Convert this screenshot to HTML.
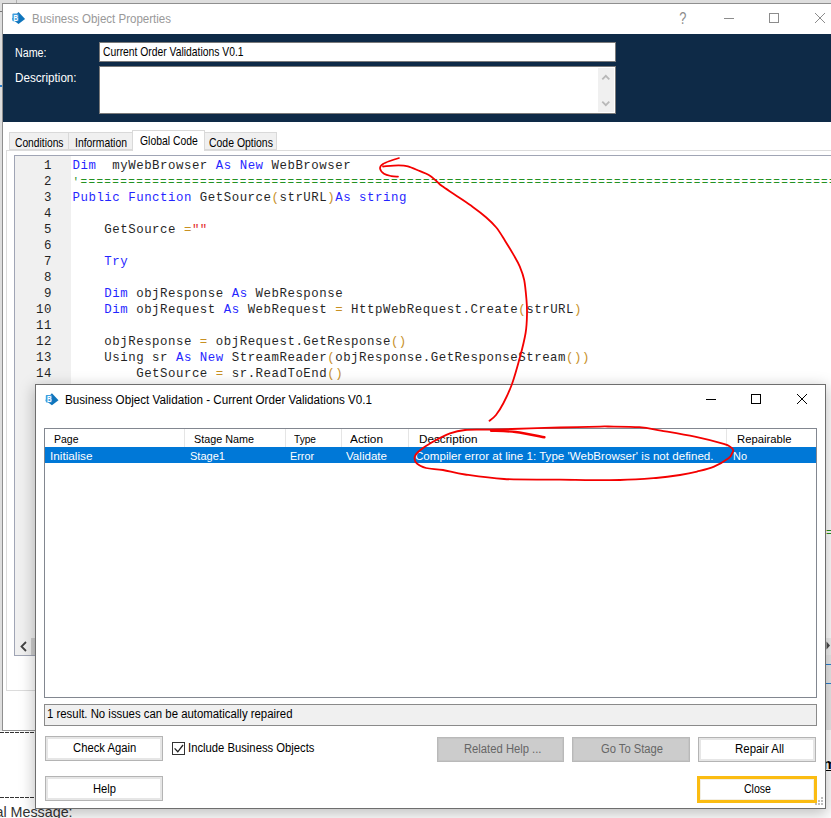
<!DOCTYPE html>
<html><head><meta charset="utf-8"><title>Business Object Properties</title>
<style>
html,body{margin:0;padding:0;}
body{width:831px;height:818px;overflow:hidden;position:relative;background:#fff;font-family:"Liberation Sans",sans-serif;font-size:12px;color:#000;}
.a{position:absolute;white-space:pre;box-sizing:border-box;}
.t{line-height:16px;height:16px;}
.code{font-family:"Liberation Mono",monospace;font-size:12.4px;letter-spacing:0.524px;line-height:16px;opacity:.86}
.k{color:#0000ff}.g{color:#008000}.gs{font-size:11px;letter-spacing:1.363px}.r{color:#e00000}.o{color:#c08000}
.btn{background:#fff;border:1px solid #b4b4b4;box-shadow:inset 0 0 0 2px #e6e6e6}
.btnd{background:#cccccc;border:1px solid #b9b9b9;box-shadow:inset 0 0 0 1px #c4c4c4}
svg{position:absolute;left:0;top:0;overflow:visible}
</style></head><body>
<!-- background app -->
<div class="a" style="left:0;top:0;width:831px;height:4px;background:#dedede"></div>
<div class="a" style="left:16px;top:0;width:1px;height:3px;background:#b0b0b0"></div>
<div class="a" style="left:0;top:0;width:3px;height:731px;background:#dedede"></div>
<div class="a" style="left:0;top:11px;width:3px;height:1px;background:#777"></div>
<div class="a" style="left:0;top:85px;width:3px;height:2px;background:#2a7fd0"></div>
<!-- below window 1 -->
<div class="a" style="left:0;top:732px;width:40px;height:1px;background:repeating-linear-gradient(90deg,#333 0 4px,#fff 4px 5px)"></div>
<div class="a" style="left:0;top:797px;width:40px;height:1px;background:repeating-linear-gradient(90deg,#333 0 4px,#fff 4px 5px)"></div>
<div class="a" id="msg" style="left:-4.5px;top:804px;font-size:14.3px;line-height:16px;color:#333">al Message:</div>

<!-- window 1 -->
<div class="a" id="w1" style="left:2px;top:3px;width:840px;height:728px;background:#fff;border:1px solid #8f8f8f"></div>
<div class="a" id="navy" style="left:3px;top:34px;width:828px;height:88px;background:#0e2a47"></div>
<div class="a" id="tbname" style="left:99px;top:42px;width:517px;height:20px;background:#fff;border:1px solid #7a7a7a"></div>
<div class="a" id="tbdesc" style="left:99px;top:66px;width:517px;height:48px;background:#fff;border:1px solid #7a7a7a"></div>
<div class="a" id="sbdesc" style="left:598px;top:68px;width:16px;height:44px;background:#f0f0f0"></div>

<!-- tabs -->
<div class="a" id="tabpanel" style="left:6px;top:150px;width:830px;height:541px;border:1px solid #dcdcdc;background:#fff"></div>
<div class="a" id="tab1" style="left:9px;top:132px;width:60px;height:18px;background:#f0f0f0;border:1px solid #d9d9d9"></div>
<div class="a" id="tab2" style="left:68px;top:132px;width:65px;height:18px;background:#f0f0f0;border:1px solid #d9d9d9"></div>
<div class="a" id="tab4" style="left:204px;top:132px;width:73px;height:18px;background:#f0f0f0;border:1px solid #d9d9d9"></div>
<div class="a" id="tab3" style="left:132px;top:130px;width:73px;height:21px;background:#fff;border:1px solid #d9d9d9;border-bottom:none"></div>

<!-- code box -->
<div class="a" id="codebox" style="left:14px;top:155px;width:830px;height:501px;border:1px solid #a0a5b5;background:#fff"></div>
<div class="a" id="gutter" style="left:15px;top:156px;width:56px;height:482px;background:#f0f0f0"></div>
<div class="a" id="hscroll" style="left:15px;top:638px;width:820px;height:17px;background:#f0f0f0"></div>
<div class="a" style="left:31px;top:638px;width:4px;height:17px;background:#cdcdcd"></div>
<div class="a code" id="lnums" style="left:15px;top:158px;width:37px;text-align:right">1
2
3
4
5
6
7
8
9
10
11
12
13
14</div>
<div class="a code" id="codetxt" style="left:72.5px;top:158px"><span class="k">Dim</span>  myWebBrowser <span class="k">As New</span> WebBrowser
<span class="g gs">'===============================================================================================</span>
<span class="k">Public Function</span> GetSource<span class="o">(</span>strURL<span class="o">)</span><span class="k">As string</span>

    GetSource <span class="o">=</span><span class="r">""</span>

    <span class="k">Try</span>

    <span class="k">Dim</span> objResponse <span class="k">As</span> WebResponse
    <span class="k">Dim</span> objRequest <span class="k">As</span> WebRequest <span class="o">=</span> HttpWebRequest.Create<span class="o">(</span>strURL<span class="o">)</span>

    objResponse <span class="o">=</span> objRequest.GetResponse<span class="o">()</span>
    Using sr <span class="k">As New</span> StreamReader<span class="o">(</span>objResponse.GetResponseStream<span class="o">())</span>
        GetSource <span class="o">=</span> sr.ReadToEnd<span class="o">()</span></div>
<div class="a code g gs" style="left:826px;top:525px">==</div>

<div class="a" style="left:826px;top:655px;width:5px;height:75px;background:#e9e9e9"></div>
<div class="a" style="left:826px;top:664px;width:5px;height:1px;background:#2a7fd0"></div>
<div class="a" style="left:826px;top:683px;width:5px;height:1px;background:#2a7fd0"></div>
<div class="a" style="left:826px;top:730px;width:5px;height:88px;background:#fff"></div>
<div class="a" style="left:823px;top:755px;font-size:15px;font-weight:bold;text-decoration:underline;line-height:18px">m</div>
<!-- window 2 -->
<div class="a" id="w2" style="left:35px;top:384px;width:791px;height:425px;background:#fff;border:1px solid #6e6e6e;box-shadow:0 4px 14px 1px rgba(0,0,0,.25)"></div>
<div class="a" id="list" style="left:44px;top:428px;width:773px;height:270px;border:1px solid #828790;background:#fff"></div>
<div class="a" style="left:184px;top:429px;width:1px;height:18px;background:#e5e5e5"></div>
<div class="a" style="left:285px;top:429px;width:1px;height:18px;background:#e5e5e5"></div>
<div class="a" style="left:341px;top:429px;width:1px;height:18px;background:#e5e5e5"></div>
<div class="a" style="left:408px;top:429px;width:1px;height:18px;background:#e5e5e5"></div>
<div class="a" style="left:726px;top:429px;width:1px;height:18px;background:#e5e5e5"></div>
<div class="a" id="selrow" style="left:45px;top:447px;width:771px;height:16px;background:#0078d7"></div>
<div class="a" id="status" style="left:44px;top:704px;width:773px;height:22px;border:1px solid #8a8a8a;background:#f0f0f0"></div>
<div class="a btn" style="left:45px;top:736px;width:118px;height:25px"></div>
<div class="a btn" style="left:45px;top:776px;width:118px;height:25px"></div>
<div class="a btnd" style="left:437px;top:737px;width:127px;height:25px"></div>
<div class="a btnd" style="left:572px;top:737px;width:118px;height:25px"></div>
<div class="a btn" style="left:698px;top:737px;width:118px;height:25px"></div>
<div class="a" style="left:697px;top:776px;width:120px;height:27px;background:#fff;border:3px solid #fbbc12;box-shadow:inset 0 0 0 1px #f3efe4"></div>
<div class="a" id="cb" style="left:172px;top:742px;width:13px;height:13px;background:#fff;border:1px solid #333"></div>

<div class="a t" id="t1" style="left:32px;top:10.899999999999999px;font-size:12px;color:#999;transform:scaleX(0.9604);transform-origin:0 50%;">Business Object Properties</div>
<div class="a t" id="lname" style="left:14.8px;top:44.5px;font-size:12px;color:#fff;transform:scaleX(0.8912);transform-origin:0 50%;">Name:</div>
<div class="a t" id="ldesc" style="left:14.7px;top:69.5px;font-size:12px;color:#fff;transform:scaleX(0.9722);transform-origin:0 50%;">Description:</div>
<div class="a t" id="tname" style="left:102.7px;top:44.0px;font-size:12.8px;color:#000;transform:scaleX(0.8073);transform-origin:0 50%;">Current Order Validations V0.1</div>
<div class="a t" id="tt1" style="left:14.5px;top:134.6px;font-size:13.2px;color:#000;transform:scaleX(0.7783);transform-origin:0 50%;">Conditions</div>
<div class="a t" id="tt2" style="left:75px;top:134.6px;font-size:13.2px;color:#000;transform:scaleX(0.7881);transform-origin:0 50%;">Information</div>
<div class="a t" id="tt3" style="left:139.7px;top:132.6px;font-size:13.2px;color:#000;transform:scaleX(0.7884);transform-origin:0 50%;">Global Code</div>
<div class="a t" id="tt4" style="left:209.4px;top:134.6px;font-size:13.2px;color:#000;transform:scaleX(0.7924);transform-origin:0 50%;">Code Options</div>
<div class="a t" id="t2" style="left:65px;top:391.5px;font-size:12px;color:#000;transform:scaleX(0.9724);transform-origin:0 50%;">Business Object Validation - Current Order Validations V0.1</div>
<div class="a t" id="h1" style="left:54px;top:430.5px;font-size:11.8px;color:#000;transform:scaleX(0.8889);transform-origin:0 50%;">Page</div>
<div class="a t" id="h2" style="left:194px;top:430.5px;font-size:11.8px;color:#000;transform:scaleX(0.9149);transform-origin:0 50%;">Stage Name</div>
<div class="a t" id="h3" style="left:294px;top:430.5px;font-size:11.8px;color:#000;transform:scaleX(0.8601);transform-origin:0 50%;">Type</div>
<div class="a t" id="h4" style="left:350px;top:430.5px;font-size:11.8px;color:#000;transform:scaleX(1.0062);transform-origin:0 50%;">Action</div>
<div class="a t" id="h5" style="left:418.5px;top:430.5px;font-size:11.8px;color:#000;transform:scaleX(0.9913);transform-origin:0 50%;">Description</div>
<div class="a t" id="h6" style="left:736.5px;top:430.5px;font-size:11.8px;color:#000;transform:scaleX(0.9551);transform-origin:0 50%;">Repairable</div>
<div class="a t" id="r1" style="left:50px;top:447.8px;font-size:11.8px;color:#fff;transform:scaleX(0.9971);transform-origin:0 50%;">Initialise</div>
<div class="a t" id="r2" style="left:190px;top:447.8px;font-size:11.8px;color:#fff;transform:scaleX(0.9361);transform-origin:0 50%;">Stage1</div>
<div class="a t" id="r3" style="left:290px;top:447.8px;font-size:11.8px;color:#fff;transform:scaleX(0.9154);transform-origin:0 50%;">Error</div>
<div class="a t" id="r4" style="left:346px;top:447.8px;font-size:11.8px;color:#fff;transform:scaleX(0.9817);transform-origin:0 50%;">Validate</div>
<div class="a t" id="r5" style="left:414.5px;top:447.8px;font-size:11.8px;color:#fff;transform:scaleX(0.9828);transform-origin:0 50%;">Compiler error at line 1: Type 'WebBrowser' is not defined.</div>
<div class="a t" id="r6" style="left:733px;top:447.8px;font-size:11.8px;color:#fff;transform:scaleX(0.9275);transform-origin:0 50%;">No</div>
<div class="a t" id="st" style="left:47.3px;top:705.9px;font-size:12px;color:#000;transform:scaleX(0.9486);transform-origin:0 50%;">1 result. No issues can be automatically repaired</div>
<div class="a t" id="b1" style="left:73.3px;top:739.9px;font-size:12px;color:#000;transform:scaleX(0.9378);transform-origin:0 50%;">Check Again</div>
<div class="a t" id="b2" style="left:188px;top:739.9px;font-size:12px;color:#000;transform:scaleX(0.9388);transform-origin:0 50%;">Include Business Objects</div>
<div class="a t" id="b3" style="left:463.5px;top:741.3px;font-size:12px;color:#666;transform:scaleX(0.9369);transform-origin:0 50%;">Related Help ...</div>
<div class="a t" id="b4" style="left:601px;top:741.3px;font-size:12px;color:#666;transform:scaleX(0.9323);transform-origin:0 50%;">Go To Stage</div>
<div class="a t" id="b5" style="left:734.5px;top:741.3px;font-size:12px;color:#000;transform:scaleX(0.9541);transform-origin:0 50%;">Repair All</div>
<div class="a t" id="b6" style="left:93px;top:780.5px;font-size:12px;color:#000;transform:scaleX(0.9316);transform-origin:0 50%;">Help</div>
<div class="a t" id="b7" style="left:744px;top:781.3px;font-size:12px;color:#000;transform:scaleX(0.8798);transform-origin:0 50%;">Close</div>

<svg width="831" height="818" viewBox="0 0 831 818">
 <!-- icons -->
 <g id="ic1" transform="translate(-33.4,-381.3)">
  <polygon points="51.9,393.2 58.5,400.3 51.9,405.2 45.3,400.3" fill="#0f75bc"/>
  <rect x="45.8" y="394.9" width="6.3" height="7.6" rx="0.8" fill="#409cdd"/>
  <text transform="translate(46.9,401.9) scale(.74,1)" font-family="Liberation Sans, sans-serif" font-weight="bold" font-size="8.6" fill="#fff">B</text>
 </g>
 <g id="ic2">
  <polygon points="51.9,393.2 58.5,400.3 51.9,405.2 45.3,400.3" fill="#0f75bc"/>
  <rect x="45.8" y="394.9" width="6.3" height="7.6" rx="0.8" fill="#409cdd"/>
  <text transform="translate(46.9,401.9) scale(.74,1)" font-family="Liberation Sans, sans-serif" font-weight="bold" font-size="8.6" fill="#fff">B</text>
 </g>
 <!-- window 1 controls -->
 <g stroke="#8c8c8c" stroke-width="1" fill="none">
  <path d="M724 18.5H734"/>
  <rect x="769.5" y="13.5" width="9" height="9"/>
  <path d="M815 13L825 23M825 13L815 23"/>
 </g>
 <text transform="translate(679.3,24) scale(.78,1)" font-family="Liberation Sans, sans-serif" font-size="16.5" fill="#8c8c8c">?</text>
 <!-- description scrollbar chevrons -->
 <g stroke="#b8b8b8" stroke-width="1.8" fill="none">
  <path d="M602.3 79.3L605.8 75.8L609.3 79.3"/>
  <path d="M602.3 101.7L605.8 105.2L609.3 101.7"/>
 </g>
 <path d="M26 642L21.5 646.5L26 651" stroke="#404040" stroke-width="1.8" fill="none"/>
 <path d="M826.5 641.5L830 645.5L826.5 649.5Z" fill="#444"/>
 <!-- window 2 controls -->
 <g stroke="#000" stroke-width="1" fill="none">
  <path d="M706 399.5H716"/>
  <rect x="751.5" y="394.5" width="9" height="9"/>
  <path d="M797 394L807 404M807 394L797 404"/>
 </g>
 <path d="M174.6 748.4L177.8 751.8L183 745" stroke="#222" stroke-width="1.3" fill="none"/>
 <!-- red annotations -->
 <g stroke="#f40000" stroke-width="1.8" fill="none" stroke-linecap="round" stroke-linejoin="round">
  <path d="M399.0 158.0C397.7 158.4 394.0 159.5 391.3 160.5C388.6 161.5 384.9 162.7 383.0 164.0C381.1 165.3 379.8 166.8 380.0 168.4C380.2 170.0 382.1 172.4 384.0 173.7C385.9 175.0 389.0 175.6 391.3 176.1C393.6 176.6 396.9 176.5 398.0 176.6" stroke-width="1.7"/>
  <path d="M383.0 166.5C385.6 166.3 394.3 165.3 398.5 165.3C402.7 165.3 404.4 165.3 408.0 166.3C411.6 167.3 416.5 169.8 420.0 171.2C423.5 172.6 426.1 173.3 428.8 174.9C431.5 176.5 433.9 178.8 436.1 180.7C438.3 182.6 438.6 183.6 442.0 186.1C445.4 188.6 451.6 192.4 456.7 195.9C461.8 199.4 467.9 203.4 472.8 206.9C477.7 210.4 482.1 213.8 486.0 217.2C489.9 220.6 493.1 223.6 496.3 227.5C499.5 231.4 502.1 236.0 505.0 240.7C507.9 245.3 511.4 251.1 513.9 255.4C516.4 259.7 518.0 262.3 519.7 266.4C521.4 270.5 523.1 274.4 524.2 280.0C525.3 285.6 526.0 294.3 526.5 300.0C527.0 305.7 527.1 308.5 527.0 314.0C526.9 319.5 526.8 325.8 525.6 333.0C524.4 340.2 522.3 348.5 520.0 357.0C517.7 365.5 514.8 376.3 512.0 384.0C509.2 391.7 506.2 397.8 503.5 403.0C500.8 408.2 498.3 412.1 496.0 415.0C493.7 417.9 490.6 419.8 489.5 420.7"/>
  <path d="M491.0 430.8C495.1 431.0 506.6 430.9 515.5 432.0C524.4 433.1 539.6 436.4 544.4 437.3" stroke-width="2.4"/>
  <path d="M600.0 426.7C592.0 426.9 571.7 427.2 560.0 427.5C548.3 427.8 541.5 428.0 530.0 428.4C518.5 428.8 501.8 429.3 491.0 429.6C480.2 429.9 471.8 429.4 465.0 430.0C458.2 430.6 455.4 431.4 450.0 433.4C444.6 435.4 437.6 439.1 432.5 442.0C427.4 444.9 422.5 448.2 419.5 450.7C416.5 453.2 415.1 454.8 414.7 457.0C414.3 459.2 415.1 461.9 417.0 463.7C418.9 465.5 421.7 466.9 426.0 468.0C430.3 469.1 436.5 468.9 443.0 470.0C449.5 471.1 454.8 473.0 465.0 474.5C475.2 476.0 488.2 478.1 504.0 479.0C519.8 479.9 540.7 479.4 560.0 479.6C579.3 479.8 604.0 480.3 620.0 480.0C636.0 479.7 646.0 478.8 656.0 478.0C666.0 477.2 673.2 476.1 680.0 475.0C686.8 473.9 691.3 473.0 697.0 471.6C702.7 470.2 708.8 468.9 714.0 466.7C719.2 464.5 725.5 460.5 728.5 458.3C731.5 456.1 731.2 454.9 732.0 453.5C732.8 452.1 733.5 451.1 733.2 450.0C733.0 448.9 732.1 448.0 730.5 447.0C728.9 446.0 729.7 445.6 723.7 443.9C717.8 442.2 705.2 438.9 694.8 436.7C684.3 434.5 670.2 432.2 661.0 430.6C651.8 429.0 648.2 427.9 639.4 427.2C630.6 426.5 614.6 426.6 608.0 426.5C601.4 426.4 608.0 426.5 600.0 426.7Z"/>
 </g>
 <!-- resize grip -->
 <g fill="#bdbdbd">
  <rect x="821" y="797" width="2" height="2"/><rect x="821" y="800" width="2" height="2"/><rect x="821" y="803" width="2" height="2"/>
  <rect x="818" y="800" width="2" height="2"/><rect x="818" y="803" width="2" height="2"/><rect x="815" y="803" width="2" height="2"/>
 </g>
</svg>
</body></html>
